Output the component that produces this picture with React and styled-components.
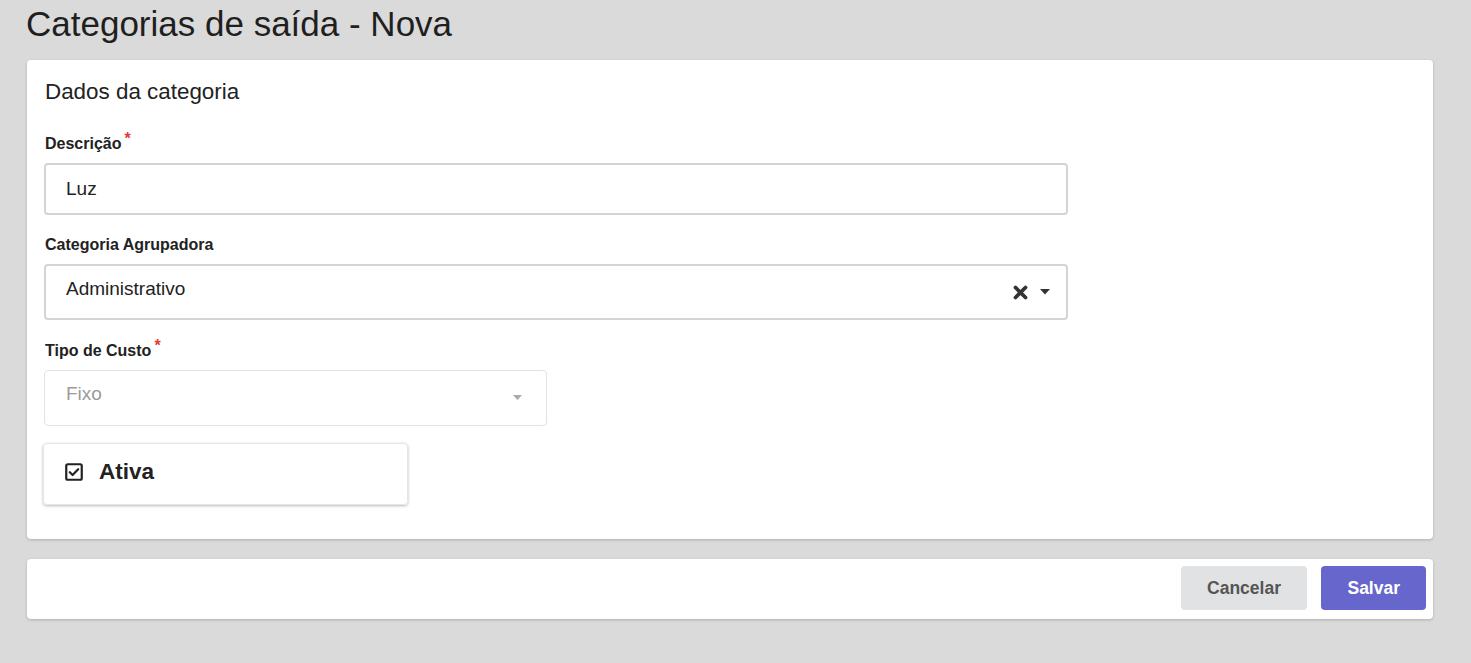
import React from "react";
import styled, { createGlobalStyle } from "styled-components";

const Global = createGlobalStyle`
  html, body { margin: 0; padding: 0; background: #dadada; }
  body { font-family: "Liberation Sans", Arial, sans-serif; color: #212529; }
  * { box-sizing: border-box; }
`;

const Page = styled.div`
  padding: 0 38px 40px 27px;
  display: flex;
  flex-direction: column;
`;

const Title = styled.h1`
  margin: 3px 0 0 -1px;
  font-size: 35px;
  font-weight: 400;
  line-height: 42px;
  color: #1f1f1f;
`;

const Card = styled.section`
  background: #fff;
  border-radius: 4px;
  box-shadow: 0 1px 3px rgba(0, 0, 0, 0.2);
  margin-top: ${(p) => p.$mt}px;
  padding: ${(p) => p.$pad};
`;

const CardTitle = styled.h2`
  margin: 0 0 29px 1px;
  font-size: 22.4px;
  font-weight: 400;
  line-height: 28px;
  color: #222;
`;

const Field = styled.div`
  display: flex;
  flex-direction: column;
  width: ${(p) => p.$w}px;
  margin-bottom: ${(p) => p.$mb}px;
`;

const Label = styled.label`
  font-size: 16px;
  font-weight: 700;
  color: #222;
  line-height: 18px;
  margin-bottom: 10px;
  margin-left: 1px;
`;

const Req = styled.span`
  color: #e53935;
  font-size: 16px;
  position: relative;
  top: -5px;
  margin-left: 3px;
`;

const Box = styled.div`
  height: ${(p) => p.$h}px;
  border: ${(p) => (p.$disabled ? "1px solid #e3e3e3" : "2px solid #d4d4d4")};
  border-radius: 4px;
  display: flex;
  align-items: center;
  padding: 0 ${(p) => (p.$disabled ? 24 : 16)}px 0 ${(p) => (p.$disabled ? 21 : 20)}px;
  font-size: 19px;
  color: ${(p) => (p.$disabled ? "#9a9a9a" : "#222")};
  background: #fff;
`;

const Value = styled.span`
  flex: 1;
  margin-top: ${(p) => p.$mt || 0}px;
`;

const Icons = styled.div`
  display: flex;
  align-items: center;
  gap: 12px;
`;

const CheckBox = styled.div`
  width: 365px;
  height: 62px;
  margin-left: -1px;
  border-radius: 4px;
  box-shadow: 0 1px 3px rgba(0, 0, 0, 0.28);
  border: 1px solid #e6e6e6;
  display: flex;
  align-items: center;
  padding: 0 0 5px 21px;
  gap: 16px;
`;

const CheckLabel = styled.span`
  font-size: 22.5px;
  font-weight: 700;
  color: #222;
`;

const Footer = styled.div`
  display: flex;
  justify-content: flex-end;
  gap: 14px;
`;

const Button = styled.button`
  height: 44px;
  padding: 0 ${(p) => p.$px}px;
  border: none;
  border-radius: 4px;
  font-family: "Liberation Sans", Arial, sans-serif;
  font-size: 17.5px;
  font-weight: 700;
  background: ${(p) => (p.$primary ? "#6766cc" : "#e1e2e4")};
  color: ${(p) => (p.$primary ? "#fff" : "#555")};
`;

const Caret = ({ color, w = 10 }) => (
  <svg width={w} height={w * 0.6} viewBox="0 0 10 6">
    <path d="M0 0h10L5 5.5z" fill={color} />
  </svg>
);

const Times = () => (
  <svg width="15" height="15" viewBox="0 0 15 15">
    <path
      d="M2.5 2.5l10 10M12.5 2.5l-10 10"
      stroke="#333"
      strokeWidth="3.8"
      strokeLinecap="round"
    />
  </svg>
);

const CheckIcon = () => (
  <svg width="18" height="18" viewBox="0 0 18 18">
    <rect x="1.25" y="1.25" width="15.5" height="15.5" rx="1.5" fill="none" stroke="#222" strokeWidth="2.2" />
    <path d="M4.8 9.2l2.8 2.8 5.6-5.8" fill="none" stroke="#222" strokeWidth="2.2" strokeLinecap="round" strokeLinejoin="round" />
  </svg>
);

export default function App() {
  return (
    <>
      <Global />
      <Page>
        <Title>Categorias de saída - Nova</Title>
        <Card $mt={15} $pad="18px 17px 34px 17px">
          <CardTitle>Dados da categoria</CardTitle>
          <Field $w={1024} $mb={21}>
            <Label>
              Descrição<Req>*</Req>
            </Label>
            <Box $h={52}>
              <Value>Luz</Value>
            </Box>
          </Field>
          <Field $w={1024} $mb={22}>
            <Label>Categoria Agrupadora</Label>
            <Box $h={56}>
              <Value $mt={-6}>Administrativo</Value>
              <Icons>
                <Times />
                <Caret color="#333" />
              </Icons>
            </Box>
          </Field>
          <Field $w={503} $mb={17}>
            <Label>
              Tipo de Custo<Req>*</Req>
            </Label>
            <Box $h={56} $disabled>
              <Value $mt={-8}>Fixo</Value>
              <Caret color="#aaa" w={9} />
            </Box>
          </Field>
          <CheckBox>
            <CheckIcon />
            <CheckLabel>Ativa</CheckLabel>
          </CheckBox>
        </Card>
        <Card $mt={20} $pad="7px 7px 9px 7px">
          <Footer>
            <Button $px={26.5}>Cancelar</Button>
            <Button $primary $px={26}>Salvar</Button>
          </Footer>
        </Card>
      </Page>
    </>
  );
}
